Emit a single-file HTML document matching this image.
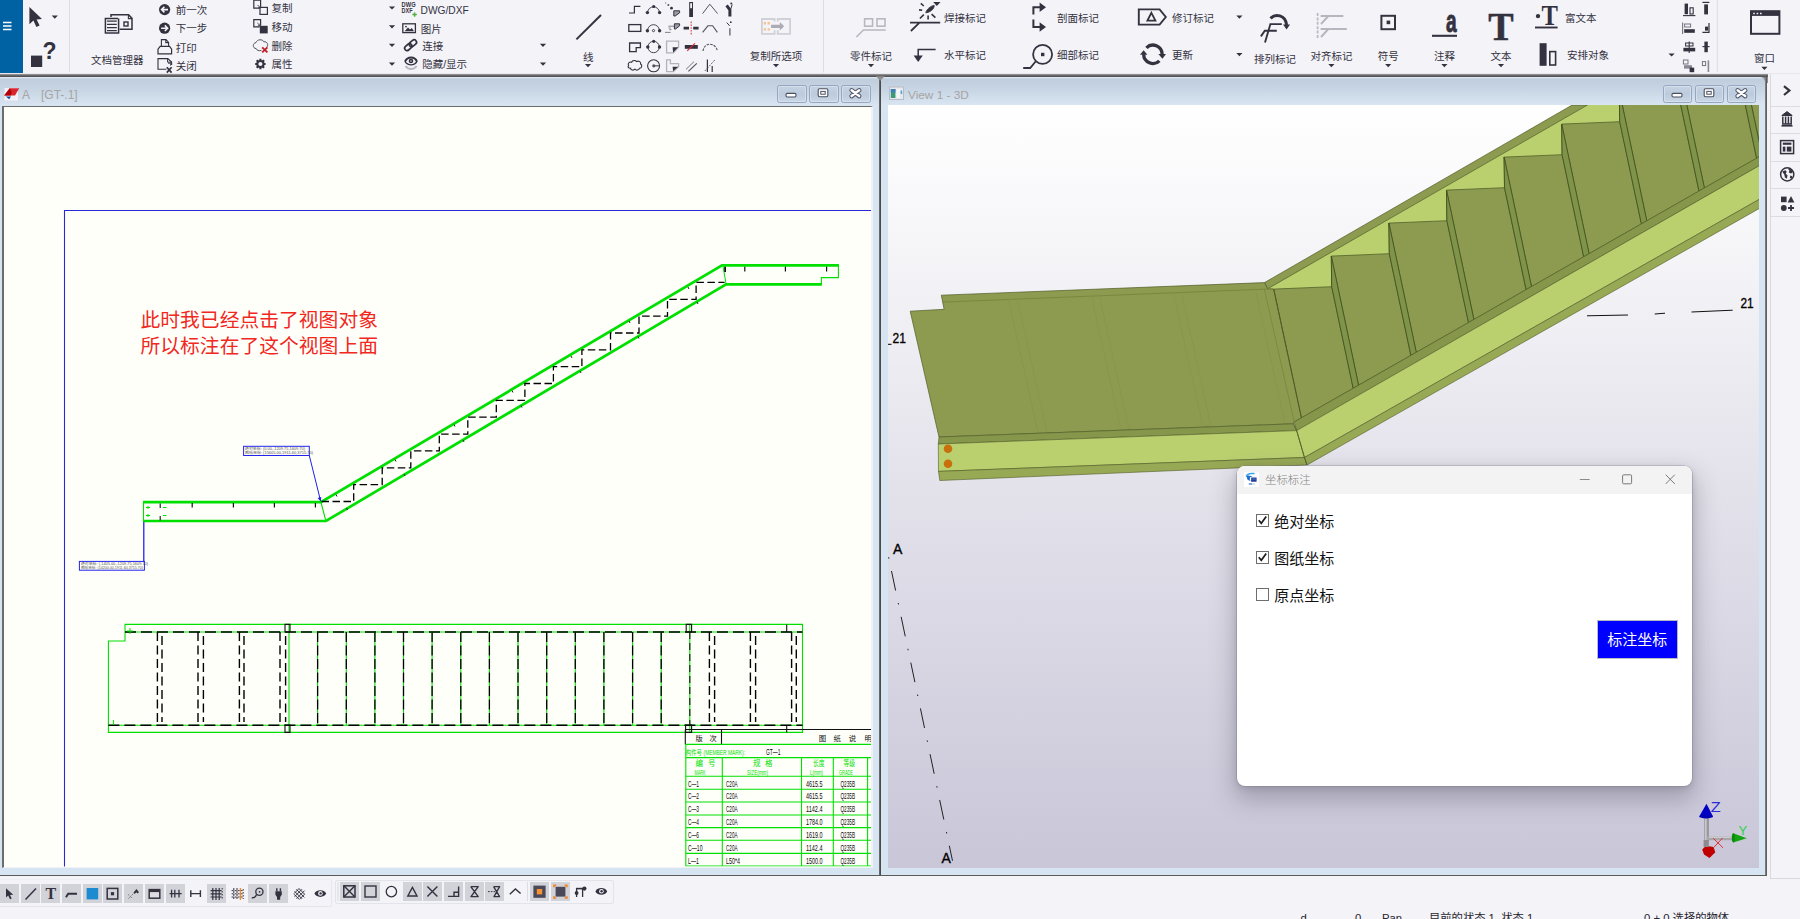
<!DOCTYPE html><html lang="zh-CN"><head><meta charset="utf-8"><title>Tekla Structures - GT-.1</title><style>

*{box-sizing:border-box}
html,body{margin:0;padding:0}
body{width:1800px;height:919px;overflow:hidden;position:relative;background:#f3f3f8;
 font-family:"Liberation Sans","Noto Sans CJK SC",sans-serif;color:#34323f}
.abs{position:absolute}
.t{position:absolute;white-space:nowrap;font-size:10.5px;line-height:12px;color:#34323f}
.tc{position:absolute;white-space:nowrap;font-size:10.5px;line-height:12px;color:#34323f;transform:translateX(-50%)}
svg{position:absolute;overflow:visible}
.dd{position:absolute;width:0;height:0;border-left:3.5px solid transparent;border-right:3.5px solid transparent;border-top:3.5px solid #34323f}
.wb{position:absolute;width:29.4px;height:17.2px;border:1px solid #97a6c1;border-radius:2.5px;background:linear-gradient(#c6d3e3,#bccbdd 50%,#c9d7e6);box-shadow:inset 0 0 0 1px rgba(225,234,244,.55)}
.tb{position:absolute;width:19px;height:19px;background:#d2d2d9}

</style></head><body>
<div class="abs" style="left:0;top:0;width:22.5px;height:74px;background:#0062a3"></div>
<svg style="left:0;top:0" width="23" height="74"><path d="M3 22.5h8.5M3 26h8.5M3 29.5h8.5" stroke="#fff" stroke-width="1.3"/></svg>
<div class="abs" style="left:0;top:72.6px;width:1800px;height:1.2px;background:linear-gradient(#ececf1,#e2e2e8)"></div><div class="abs" style="left:0;top:73.6px;width:1767.8px;height:3.4px;background:linear-gradient(#a4a4a6,#6a6a6c 45%,#4a4a4c)"></div>
<div class="abs" style="left:0;top:77px;width:1767.4px;height:798px;background:#d7e4f1"></div>
<div class="abs" style="left:0;top:77px;width:879px;height:29px;background:linear-gradient(#e6eef7 0,#bfcddd 2px,#c6d4e3 40%,#d9e5f1)"></div>
<div class="abs" style="left:1758px;top:77px;width:9.6px;height:6px;background:#8c8c8e"></div><div class="abs" style="left:881px;top:77px;width:884.4px;height:28px;border-top-right-radius:5px;background:linear-gradient(#e6eef7 0,#bfcddd 2px,#c6d4e3 40%,#d9e5f1)"></div>
<div class="abs" style="left:879px;top:77px;width:2.4px;height:798px;background:linear-gradient(90deg,#777,#3c3c3c)"></div>
<svg style="left:872px;top:76px" width="16" height="8"><path d="M3.8 0.2h9l-4.5 4.6z" fill="#8f8f8f"/></svg>
<div class="abs" style="left:2px;top:106px;width:871px;height:762.4px;background:#fffffa;border-left:2px solid #6c6c6c;border-top:1.5px solid #6c6c6c;border-right:2px solid #f1f1f8;border-bottom:1.8px solid #f1f1f8"></div>
<div class="abs" style="left:1765px;top:77px;width:2.4px;height:799px;background:linear-gradient(90deg,#8a8a8a,#505050)"></div>
<div class="abs" style="left:0;top:874.6px;width:1767.4px;height:1.6px;background:#5a5a5a"></div>
<div class="abs" style="left:1768px;top:77px;width:32px;height:801px;background:#f3f3f8"></div>
<div class="abs" style="left:1770px;top:73.6px;width:1px;height:804.4px;background:#d9d9df"></div>
<div class="abs" style="left:1770px;top:877.5px;width:30px;height:1px;background:#d9d9df"></div>
<div class="abs" style="left:1771px;top:105.5px;width:29px;height:1px;background:#dcdce2"></div>
<div class="abs" style="left:1771px;top:133px;width:29px;height:1px;background:#dcdce2"></div>
<div class="abs" style="left:1771px;top:160.5px;width:29px;height:1px;background:#dcdce2"></div>
<div class="abs" style="left:1771px;top:188px;width:29px;height:1px;background:#dcdce2"></div>
<div class="abs" style="left:1771px;top:215.5px;width:29px;height:1px;background:#dcdce2"></div>
<svg style="left:0;top:0" width="1800" height="919" viewBox="0 0 1800 919">
<defs><clipPath id="cL"><rect x="4" y="107.5" width="867" height="759.1"/></clipPath></defs>
<g clip-path="url(#cL)" fill="none">
<path d="M64.5 867V210.5H872" stroke="#2828d8" stroke-width="1.1"/>
<path d="M143.5 502.2H320.9L722 265.4H838.9" stroke="#00e000" stroke-width="2.8" stroke-linejoin="miter"/>
<path d="M143.5 521H326L726.1 284.3H821.8" stroke="#00e000" stroke-width="2.7" stroke-linejoin="miter"/>
<path d="M143.5 501V522M320.9 502L325.6 520M838.4 264.5V277.6H821.4V285" stroke="#00e000" stroke-width="1.1"/>
<path d="M722.9 266L726.1 284" stroke="#00e000" stroke-width="1"/>
<path d="M321.5 501.5H353.7V484.6H382.2V467.8H410.8V450.9H439.3V434.1H467.8V417.2H496.3V400.4H524.9V383.5H553.4V366.7H581.9V349.8H610.5V333.0H639.0V316.1H667.5V299.3H696.1V282.4H724.6" stroke="#000" stroke-width="1.3" stroke-dasharray="7.5 3.5"/>
<path d="M192.2 503V507.5M233.4 503V507.5M274.4 503V507.5M315.4 503V507.5M744.8 266.8V271.6M785.4 266.8V271.6M826.6 266.8V271.6M724.8 266.8V272M725.4 266.8V272" stroke="#111" stroke-width="1.2"/>
<path d="M160.2 503.4V508M160.2 516V520.4" stroke="#111" stroke-width="1.1"/>
<path d="M146 507.5h4M146 515.5h4M163 507.5h3.5M163 515.5h3.5M148 506v3M148 514v3" stroke="#00e000" stroke-width="1"/>
<path d="M336 494.5l1 2M395 459.5l1 2M454 424.5l1 2M512 390.5l1 2M571 356l1 2M629 321l1 2M688 287l1 2M346.5 508l1 2M404 474l1 2M463 440l1 2M521 405.5l1 2M580 371l1 2M638 336.5l1 2M697 302l1 2" stroke="#222" stroke-width="1"/>
<rect x="243.6" y="446.3" width="65.7" height="9.2" stroke="#2323ee" stroke-width="1"/>
<path d="M309.3 455.5L320.5 500.5" stroke="#2020f0" stroke-width="1"/><path d="M320.8 501.5l-3.2-3.6 3.6-1z" fill="#1a1af0"/>
<rect x="79.4" y="561.4" width="65" height="8.8" stroke="#2323ee" stroke-width="1"/>
<path d="M143.8 522V561.5" stroke="#1a1af0" stroke-width="1.25"/>
<path d="M125 624.4H802.5V732.4H108.4V641H125z" stroke="#00e000" stroke-width="1.1"/>
<path d="M125 632H802.5M108.4 725.2H802.5M289 624.4V732.4M689.8 624.4V732.4" stroke="#00e000" stroke-width="1.1"/>
<path d="M125 632H802.5M108.4 725.2H802.5" stroke="#000" stroke-width="1.5" stroke-dasharray="11 5"/>
<path d="M157.4 632V725M162 636V722M198 632V725M203.4 636V722M239.4 632V725M244 636V722M280 632V725M285.6 636V722M709.4 632V725M714.6 636V722M750.4 632V725M755.6 636V722M791.6 632V725M796.3 636V722" stroke="#000" stroke-width="1.4" stroke-dasharray="9 4.5"/>
<path d="M317.6 632V725M346.3 632V725M374.9 632V725M403.5 632V725M432.1 632V725M460.8 632V725M489.4 632V725M518.0 632V725M546.7 632V725M575.3 632V725M603.9 632V725M632.6 632V725M661.2 632V725" stroke="#00e000" stroke-width="1.1"/>
<path d="M317.6 632V725M346.3 632V725M374.9 632V725M403.5 632V725M432.1 632V725M460.8 632V725M489.4 632V725M518.0 632V725M546.7 632V725M575.3 632V725M603.9 632V725M632.6 632V725M661.2 632V725" stroke="#000" stroke-width="1.3" stroke-dasharray="10 3.5"/>
<path d="M689.8 632V725" stroke="#151515" stroke-width="1.1" stroke-dasharray="7 4"/>
<path d="M285 624.4h5v7.6h-5zM285 725h5v7.4h-5zM686.2 624.4h5.4v7.6h-5.4zM685.6 725h6v7.4h-6z" stroke="#111" stroke-width="1.1"/>
<path d="M786.7 624.4V632M786.7 725V732.4" stroke="#111" stroke-width="1.1"/>
<path d="M130 628v6M127 631h6M113.4 720v5" stroke="#00e000" stroke-width="1"/>
<path d="M685.3 729.5H872M685.3 729.5V744.4M721.5 729.5V744.4" stroke="#111" stroke-width="1.1"/>
<path d="M685.3 744.4H872M685.3 757.6H872M685.3 776.3H872M685.3 789.2H872M685.3 802H872M685.3 815H872M685.3 827.6H872M685.3 840.3H872M685.3 853.4H872M685.3 866H872M685.8 744.4V866M722.3 757.6V866M801.5 757.6V866M833.3 757.6V866M867.6 757.6V866" stroke="#00e000" stroke-width="1.1"/>
</g>
<g clip-path="url(#cL)" font-family="Liberation Sans, Noto Sans CJK SC, sans-serif" font-size="8.6" fill="#0a0a0a">
<text x="695.5" y="740.6" font-size="7.2">版</text>
<text x="709.5" y="740.6" font-size="7.2">次</text>
<text x="818.8" y="740.8" font-size="7.4">图</text>
<text x="833.4" y="740.8" font-size="7.4">纸</text>
<text x="848.8" y="740.8" font-size="7.4">说</text>
<text x="864.4" y="740.8" font-size="7.4">明</text>
<text x="685.8" y="754.5" fill="#00e000" textLength="16" lengthAdjust="spacingAndGlyphs" font-size="7">构件号</text>
<text x="703.5" y="754.5" fill="#00e000" textLength="41.5" lengthAdjust="spacingAndGlyphs" font-size="7.6">(MEMBER MARK):</text>
<text x="766" y="754.5" textLength="14.5" lengthAdjust="spacingAndGlyphs">GT—1</text>
<text x="695.5" y="766" fill="#00e000" font-size="7.5">编</text>
<text x="708" y="766" fill="#00e000" font-size="7.5">号</text>
<text x="694.5" y="774.5" fill="#00e000" textLength="11" lengthAdjust="spacingAndGlyphs" font-size="7">MARK</text>
<text x="753" y="766" fill="#00e000" font-size="7.5">规</text>
<text x="765" y="766" fill="#00e000" font-size="7.5">格</text>
<text x="747" y="774.5" fill="#00e000" textLength="21" lengthAdjust="spacingAndGlyphs" font-size="7">SIZE(mm)</text>
<text x="813" y="766" fill="#00e000" textLength="11.5" lengthAdjust="spacingAndGlyphs" font-size="7.5">长度</text>
<text x="810" y="774.5" fill="#00e000" textLength="13" lengthAdjust="spacingAndGlyphs" font-size="7">L(mm)</text>
<text x="843.5" y="766" fill="#00e000" textLength="11.5" lengthAdjust="spacingAndGlyphs" font-size="7.5">等级</text>
<text x="839" y="774.5" fill="#00e000" textLength="14" lengthAdjust="spacingAndGlyphs" font-size="7">GRADE</text>
<text x="688" y="786.6" textLength="11" lengthAdjust="spacingAndGlyphs">C—1</text>
<text x="726" y="786.6" textLength="11.5" lengthAdjust="spacingAndGlyphs">C20A</text>
<text x="806" y="786.6" textLength="16.5" lengthAdjust="spacingAndGlyphs">4615.5</text>
<text x="840.5" y="786.6" textLength="14.5" lengthAdjust="spacingAndGlyphs">Q235B</text>
<text x="688" y="799.4300000000001" textLength="11" lengthAdjust="spacingAndGlyphs">C—2</text>
<text x="726" y="799.4300000000001" textLength="11.5" lengthAdjust="spacingAndGlyphs">C20A</text>
<text x="806" y="799.4300000000001" textLength="16.5" lengthAdjust="spacingAndGlyphs">4615.5</text>
<text x="840.5" y="799.4300000000001" textLength="14.5" lengthAdjust="spacingAndGlyphs">Q235B</text>
<text x="688" y="812.26" textLength="11" lengthAdjust="spacingAndGlyphs">C—3</text>
<text x="726" y="812.26" textLength="11.5" lengthAdjust="spacingAndGlyphs">C20A</text>
<text x="806" y="812.26" textLength="16.5" lengthAdjust="spacingAndGlyphs">1142.4</text>
<text x="840.5" y="812.26" textLength="14.5" lengthAdjust="spacingAndGlyphs">Q235B</text>
<text x="688" y="825.09" textLength="11" lengthAdjust="spacingAndGlyphs">C—4</text>
<text x="726" y="825.09" textLength="11.5" lengthAdjust="spacingAndGlyphs">C20A</text>
<text x="806" y="825.09" textLength="16.5" lengthAdjust="spacingAndGlyphs">1784.0</text>
<text x="840.5" y="825.09" textLength="14.5" lengthAdjust="spacingAndGlyphs">Q235B</text>
<text x="688" y="837.9200000000001" textLength="11" lengthAdjust="spacingAndGlyphs">C—6</text>
<text x="726" y="837.9200000000001" textLength="11.5" lengthAdjust="spacingAndGlyphs">C20A</text>
<text x="806" y="837.9200000000001" textLength="16.5" lengthAdjust="spacingAndGlyphs">1619.0</text>
<text x="840.5" y="837.9200000000001" textLength="14.5" lengthAdjust="spacingAndGlyphs">Q235B</text>
<text x="688" y="850.75" textLength="14.5" lengthAdjust="spacingAndGlyphs">C—10</text>
<text x="726" y="850.75" textLength="11.5" lengthAdjust="spacingAndGlyphs">C20A</text>
<text x="806" y="850.75" textLength="16.5" lengthAdjust="spacingAndGlyphs">1142.4</text>
<text x="840.5" y="850.75" textLength="14.5" lengthAdjust="spacingAndGlyphs">Q235B</text>
<text x="688" y="863.58" textLength="11" lengthAdjust="spacingAndGlyphs">L—1</text>
<text x="726" y="863.58" textLength="14" lengthAdjust="spacingAndGlyphs">L50*4</text>
<text x="806" y="863.58" textLength="16.5" lengthAdjust="spacingAndGlyphs">1500.0</text>
<text x="840.5" y="863.58" textLength="14.5" lengthAdjust="spacingAndGlyphs">Q235B</text>
</g>
<g clip-path="url(#cL)" font-family="Liberation Sans, Noto Sans CJK SC, sans-serif" font-size="3.6" fill="#555">
<text x="245" y="450.3" textLength="60" lengthAdjust="spacingAndGlyphs">绝对坐标: (0.00,-1209.75,1609.70)</text>
<text x="245" y="454.3" textLength="68" lengthAdjust="spacingAndGlyphs">图纸坐标: (15605.00,1911.60,3715.70)</text>
<text x="81" y="565.2" textLength="67" lengthAdjust="spacingAndGlyphs">绝对坐标: (-1405.00,-1209.75,1609.70)</text>
<text x="81" y="569" textLength="62" lengthAdjust="spacingAndGlyphs">图纸坐标: (14200.00,1911.60,3715.70)</text>
</g>
<g font-family="Liberation Sans, Noto Sans CJK SC, sans-serif" font-size="19.8" fill="#f0281e">
<text x="140.5" y="326.6" textLength="237.5" lengthAdjust="spacing">此时我已经点击了视图对象</text>
<text x="140.5" y="353" textLength="237.5" lengthAdjust="spacing">所以标注在了这个视图上面</text>
</g>
</svg>
<svg style="left:0;top:0" width="1800" height="919" viewBox="0 0 1800 919">
<defs><linearGradient id="bg3" x1="0" y1="0" x2="0" y2="1"><stop offset="0" stop-color="#ffffff"/><stop offset="0.12" stop-color="#f9f9fb"/><stop offset="0.45" stop-color="#e6e5ed"/><stop offset="1" stop-color="#c9c6d8"/></linearGradient><clipPath id="c3"><rect x="888" y="105" width="871" height="763"/></clipPath></defs>
<rect x="888" y="105" width="871" height="763" fill="url(#bg3)"/>
<g clip-path="url(#c3)" stroke-linejoin="round">
<polygon points="1267.4,288.5 1587.0,105.0 1800.0,105.0 1800.0,134.0 1294.2,422.0" fill="#bad06f"/>
<polygon points="1264.5,282.6 1572.2,105.0 1587.5,105.0 1267.6,288.8" fill="#8c9b4f" stroke="#4f5d27" stroke-width="0.7"/>
<polygon points="1273.7,289.1 1331.7,286.7 1353.2,388.3 1301.0,418.1" fill="#8c9b4f" stroke="#4f5d27" stroke-width="0.75"/>
<path d="M1331.7 286.7L1331.3 256.1" stroke="#4a5826" stroke-width="0.9"/>
<polygon points="1331.3,256.1 1389.3,253.7 1410.9,355.4 1358.6,385.2" fill="#8c9b4f" stroke="#4f5d27" stroke-width="0.75"/>
<polygon points="1331.3,256.1 1358.6,385.2 1353.2,388.3 1331.7,286.7" fill="#7f9448" stroke="#3f4c1d" stroke-width="0.8"/>
<path d="M1389.3 253.7L1388.9 223.1" stroke="#4a5826" stroke-width="0.9"/>
<polygon points="1388.9,223.1 1446.9,220.7 1468.5,322.6 1416.3,352.4" fill="#8c9b4f" stroke="#4f5d27" stroke-width="0.75"/>
<polygon points="1388.9,223.1 1416.3,352.4 1410.9,355.4 1389.3,253.7" fill="#7f9448" stroke="#3f4c1d" stroke-width="0.8"/>
<path d="M1446.9 220.7L1446.5 190.1" stroke="#4a5826" stroke-width="0.9"/>
<polygon points="1446.5,190.1 1504.5,187.7 1526.1,289.7 1473.9,319.5" fill="#8c9b4f" stroke="#4f5d27" stroke-width="0.75"/>
<polygon points="1446.5,190.1 1473.9,319.5 1468.5,322.6 1446.9,220.7" fill="#7f9448" stroke="#3f4c1d" stroke-width="0.8"/>
<path d="M1504.5 187.7L1504.1 157.1" stroke="#4a5826" stroke-width="0.9"/>
<polygon points="1504.1,157.1 1562.1,154.7 1583.7,256.8 1531.5,286.6" fill="#8c9b4f" stroke="#4f5d27" stroke-width="0.75"/>
<polygon points="1504.1,157.1 1531.5,286.6 1526.1,289.7 1504.5,187.7" fill="#7f9448" stroke="#3f4c1d" stroke-width="0.8"/>
<path d="M1562.1 154.7L1561.7 124.1" stroke="#4a5826" stroke-width="0.9"/>
<polygon points="1561.7,124.1 1619.7,121.7 1641.4,223.9 1589.1,253.7" fill="#8c9b4f" stroke="#4f5d27" stroke-width="0.75"/>
<polygon points="1561.7,124.1 1589.1,253.7 1583.7,256.8 1562.1,154.7" fill="#7f9448" stroke="#3f4c1d" stroke-width="0.8"/>
<path d="M1619.7 121.7L1619.3 91.1" stroke="#4a5826" stroke-width="0.9"/>
<polygon points="1619.3,91.1 1677.3,88.7 1699.0,191.1 1646.8,220.9" fill="#8c9b4f" stroke="#4f5d27" stroke-width="0.75"/>
<polygon points="1619.3,91.1 1646.8,220.9 1641.4,223.9 1619.7,121.7" fill="#7f9448" stroke="#3f4c1d" stroke-width="0.8"/>
<path d="M1677.3 88.7L1676.9 58.1" stroke="#4a5826" stroke-width="0.9"/>
<polygon points="1676.9,58.1 1734.9,55.7 1756.6,158.2 1704.4,188.0" fill="#8c9b4f" stroke="#4f5d27" stroke-width="0.75"/>
<polygon points="1676.9,58.1 1704.4,188.0 1699.0,191.1 1677.3,88.7" fill="#7f9448" stroke="#3f4c1d" stroke-width="0.8"/>
<path d="M1734.9 55.7L1734.5 25.1" stroke="#4a5826" stroke-width="0.9"/>
<polygon points="1734.5,25.1 1792.5,22.7 1814.3,125.3 1762.0,155.1" fill="#8c9b4f" stroke="#4f5d27" stroke-width="0.75"/>
<polygon points="1734.5,25.1 1762.0,155.1 1756.6,158.2 1734.9,55.7" fill="#7f9448" stroke="#3f4c1d" stroke-width="0.8"/>
<path d="M1792.5 22.7L1792.1 -7.9" stroke="#4a5826" stroke-width="0.9"/>
<polygon points="1792.1,-7.9 1850.1,-10.3 1871.9,92.4 1819.6,122.2" fill="#8c9b4f" stroke="#4f5d27" stroke-width="0.75"/>
<polygon points="1792.1,-7.9 1819.6,122.2 1814.3,125.3 1792.5,22.7" fill="#7f9448" stroke="#3f4c1d" stroke-width="0.8"/>
<path d="M1850.1 -10.3L1849.7 -40.9" stroke="#4a5826" stroke-width="0.9"/>
<polygon points="941.3,295.2 1264.5,282.6 1267.6,288.8 1273.7,289.1 1301.4,417.6 1294.2,422.0 1293.5,423.8 939.0,437.0 910.2,311.2 944.1,309.3" fill="#8c9b4f" stroke="#4f5d27" stroke-width="0.7"/>
<path d="M942.6 302.1L1273 288.8" stroke="#78883f" stroke-width="1" fill="none"/>
<path d="M1264.3 289L1294.2 422" stroke="#74843c" stroke-width="0.7" fill="none"/>
<path d="M1273.7 289.1L1301.4 417.6" stroke="#4a5824" stroke-width="0.8" fill="none"/>
<path d="M1008 297.4L1038 432.5" stroke="#86964b" stroke-width="0.8" fill="none"/>
<path d="M1017 297.0L1047 432.2" stroke="#86964b" stroke-width="0.8" fill="none"/>
<path d="M1091 294.0L1121 429.4" stroke="#86964b" stroke-width="0.8" fill="none"/>
<path d="M1099 293.7L1129 429.1" stroke="#86964b" stroke-width="0.8" fill="none"/>
<path d="M1173 290.8L1203 426.4" stroke="#86964b" stroke-width="0.8" fill="none"/>
<path d="M1181 290.4L1211 426.1" stroke="#86964b" stroke-width="0.8" fill="none"/>
<path d="M1255 287.5L1285 423.3" stroke="#86964b" stroke-width="0.8" fill="none"/>
<polygon points="939.0,437.0 1293.5,423.8 1296.7,430.6 938.3,444.0" fill="#86964a" stroke="#4f5d27" stroke-width="0.6"/>
<polygon points="938.3,444.0 1296.7,430.6 1304.5,457.5 938.5,471.4" fill="#bad06f" stroke="#4f5d27" stroke-width="0.6"/>
<polygon points="938.5,471.4 1304.5,457.5 1307.0,465.0 939.8,480.5" fill="#98a955" stroke="#4f5d27" stroke-width="0.6"/>
<polygon points="1294.2,422.0 1800.0,133.4 1800.0,142.4 1296.7,430.6" fill="#86964a" stroke="#4f5d27" stroke-width="0.6"/>
<polygon points="1296.7,430.6 1800.0,142.4 1800.0,176.2 1304.5,457.5" fill="#bad06f" stroke="#4f5d27" stroke-width="0.6"/>
<polygon points="1304.5,457.5 1800.0,176.2 1800.0,185.4 1307.0,465.0" fill="#98a955" stroke="#4f5d27" stroke-width="0.6"/>
<path d="M1293.5 423.8L1296.7 430.6L1304.5 457.5L1307 465" stroke="#4f5d27" stroke-width="0.7" fill="none"/>
<circle cx="948" cy="448.8" r="4.3" fill="#c8700d"/><circle cx="948" cy="463.8" r="4.3" fill="#c8700d"/>
</g>
<g font-family="Liberation Sans, sans-serif" fill="#000" clip-path="url(#c3)">
<text x="892.6" y="343" font-size="15" stroke="#000" stroke-width="0.35" textLength="13.4" lengthAdjust="spacingAndGlyphs">21</text><path d="M888 344.3h3.5" stroke="#000" stroke-width="1"/>
<text x="1740.4" y="308.4" font-size="15" stroke="#000" stroke-width="0.35" textLength="13.2" lengthAdjust="spacingAndGlyphs">21</text>
<path d="M1587 315.8L1628 315M1654.7 314L1665 313.2M1691.5 312L1732.7 310.2" stroke="#111" stroke-width="1" fill="none"/>
<text x="893" y="553.5" font-size="14" stroke="#000" stroke-width="0.35">A</text>
<text x="941.5" y="862.5" font-size="14" stroke="#000" stroke-width="0.35">A</text>
<path d="M888.6 557.2L952.5 860.8" stroke="#222" stroke-width="1" stroke-dasharray="1.5 12.6 20 12.7" fill="none"/>
</g>
<g>
<rect x="1704.2" y="816" width="4.8" height="26" fill="#9c9aa0"/><rect x="1705" y="816" width="1.6" height="26" fill="#c9c8cc"/>
<rect x="1707" y="836" width="27" height="4.2" fill="#a8a6ab"/><rect x="1709" y="836.4" width="25" height="1.4" fill="#d4d3d7"/>
<polygon points="1706.5,803.8 1699.2,816.5 1713,816.5" fill="#0000c8"/><ellipse cx="1706.1" cy="816.6" rx="6.9" ry="1.8" fill="#0000b4"/>
<polygon points="1746.8,838.3 1733.2,833.2 1733.2,842.4" fill="#12a512"/><ellipse cx="1733.4" cy="837.8" rx="1.6" ry="4.6" fill="#0c8c0c"/>
<path d="M1702.2 849.5L1706 845.8L1713.5 847L1715.3 852.2L1709.5 858L1704 854.5z" fill="#c00000"/>
<rect x="1703.6" y="840" width="5.2" height="7" fill="#8d8b90"/>
<path d="M1713.2 838.2L1723 847.8M1722.5 838L1713.8 847.5" stroke="#e02020" stroke-width="0.9"/>
<text x="1710.8" y="812" font-family="Liberation Sans, sans-serif" font-size="15.5" fill="#2a2ad8" textLength="10" lengthAdjust="spacingAndGlyphs">Z</text>
<text x="1738.5" y="834.5" font-family="Liberation Sans, sans-serif" font-size="13" fill="#2fd24a">Y</text>
</g>
</svg>
<svg style="left:3px;top:86px" width="18" height="16"><rect x="1.5" y="2" width="13.5" height="12.5" fill="#f3f1f7"/><path d="M6.8 2.2H16.2L12 9.6H1.2z" fill="#d8262e"/><path d="M6.8 2.2L1.2 9.6H7.8L8.6 6z" fill="#b00005"/><path d="M2.8 10.4H8L6.2 13.2z" fill="#0a4fa0"/></svg>
<div class="t" style="left:22px;top:88px;font-size:12px;line-height:14px;color:#a6a4a4">A</div>
<div class="t" style="left:41px;top:88px;font-size:12px;line-height:14px;color:#a6a4a4">[GT-.1]</div>
<div class="wb" style="left:777.2px;top:85.4px"></div>
<svg style="left:777.2px;top:85.4px" width="29" height="17"><rect x="9" y="8.4" width="10" height="3.6" rx="1.2" fill="#fff" stroke="#4a4f5e" stroke-width="1.1"/></svg>
<div class="wb" style="left:809.2px;top:85.4px"></div>
<svg style="left:809.2px;top:85.4px" width="29" height="17"><rect x="9.2" y="3.8" width="9.6" height="8" rx="1.2" fill="#fff" stroke="#4a4f5e" stroke-width="1.1"/><rect x="11.8" y="6.4" width="4.4" height="2.8" fill="#fff" stroke="#4a4f5e" stroke-width="1"/></svg>
<div class="wb" style="left:841.2px;top:85.4px"></div>
<svg style="left:841.2px;top:85.4px" width="29" height="17"><path d="M10.6 5.3L18.2 11.1M18.2 5.3L10.6 11.1" stroke="#4f5567" stroke-width="4.5" stroke-linecap="round"/><path d="M10.6 5.3L18.2 11.1M18.2 5.3L10.6 11.1" stroke="#fff" stroke-width="2.5" stroke-linecap="round"/></svg>
<svg style="left:889px;top:86px" width="16" height="15"><rect x="0.5" y="1" width="14" height="12.5" fill="#e6e9ee" stroke="#b9bcc6" stroke-width="1"/><rect x="1.8" y="3" width="4.6" height="9" fill="#3c9a74"/><rect x="1.8" y="3" width="4.6" height="3.5" fill="#3f7fb8"/><rect x="7.6" y="3" width="3.2" height="9" fill="#f4f6f8"/><rect x="11.6" y="4.5" width="1.6" height="3.5" fill="#5aa0d0"/></svg>
<div class="t" style="left:908px;top:88px;font-size:11.8px;line-height:14px;color:#a6a4a4">View 1 - 3D</div>
<div class="wb" style="left:1663px;top:85.4px"></div>
<svg style="left:1663px;top:85.4px" width="29" height="17"><rect x="9" y="8.4" width="10" height="3.6" rx="1.2" fill="#fff" stroke="#4a4f5e" stroke-width="1.1"/></svg>
<div class="wb" style="left:1695px;top:85.4px"></div>
<svg style="left:1695px;top:85.4px" width="29" height="17"><rect x="9.2" y="3.8" width="9.6" height="8" rx="1.2" fill="#fff" stroke="#4a4f5e" stroke-width="1.1"/><rect x="11.8" y="6.4" width="4.4" height="2.8" fill="#fff" stroke="#4a4f5e" stroke-width="1"/></svg>
<div class="wb" style="left:1727px;top:85.4px"></div>
<svg style="left:1727px;top:85.4px" width="29" height="17"><path d="M10.6 5.3L18.2 11.1M18.2 5.3L10.6 11.1" stroke="#4f5567" stroke-width="4.5" stroke-linecap="round"/><path d="M10.6 5.3L18.2 11.1M18.2 5.3L10.6 11.1" stroke="#fff" stroke-width="2.5" stroke-linecap="round"/></svg>
<div class="abs" style="left:1237px;top:466px;width:455px;height:320px;border-radius:8px;background:#fff;box-shadow:0 0 0 0.6px rgba(120,120,130,.55),0 11px 24px 3px rgba(66,64,80,.32),0 2px 6px rgba(66,64,80,.2);overflow:hidden"><div style="height:28.4px;background:#f3f3f3"></div></div>
<svg style="left:1244.2px;top:472px" width="15" height="15"><rect width="15" height="15" fill="#fff"/><path d="M2.2 4.6C3 2.4 5.6 1.4 8.4 1.6L10.6 1.4" fill="none" stroke="#37a6e6" stroke-width="1.5"/><path d="M2.4 4L3.4 7.6L5.8 9L6 5.2L8.8 4.4L4.6 3.4z" fill="#1f6fd0"/><path d="M7.2 5.6H12.6V9.8H7.4L6.4 8.6H7.2z" fill="#22409a"/><path d="M8.4 7h3.4" stroke="#6c8fd8" stroke-width="0.7"/><path d="M4.8 12h3.4" stroke="#2a62c8" stroke-width="1.1"/><path d="M8.6 12h2.2" stroke="#a9c3ee" stroke-width="1"/></svg>
<div class="t" style="left:1265px;top:472.5px;font-size:11.4px;line-height:14px;color:#858585;font-weight:300">坐标标注</div>
<svg style="left:1575px;top:470px" width="110" height="20"><path d="M4.8 9.5h9.8" stroke="#8a8a8a" stroke-width="1"/><rect x="47.6" y="4.8" width="9" height="9" rx="1" fill="none" stroke="#7a7a7a" stroke-width="1"/><path d="M90.7 4.7L99.8 13.9M99.8 4.7L90.7 13.9" stroke="#7a7a7a" stroke-width="1"/></svg>
<div class="abs" style="left:1256.2px;top:514.2px;width:13px;height:12.6px;border:1px solid #6e6e6e;background:#fff"></div>
<svg style="left:1256.2px;top:514.2px" width="13" height="13"><path d="M2.8 6.2L5.3 9.3L10.2 2.6" fill="none" stroke="#1c1c1c" stroke-width="1.7"/></svg>
<div class="t" style="left:1274.2px;top:511.80000000000007px;font-size:15px;line-height:19px;color:#111">绝对坐标</div>
<div class="abs" style="left:1256.2px;top:551.4px;width:13px;height:12.6px;border:1px solid #6e6e6e;background:#fff"></div>
<svg style="left:1256.2px;top:551.4px" width="13" height="13"><path d="M2.8 6.2L5.3 9.3L10.2 2.6" fill="none" stroke="#1c1c1c" stroke-width="1.7"/></svg>
<div class="t" style="left:1274.2px;top:549.0px;font-size:15px;line-height:19px;color:#111">图纸坐标</div>
<div class="abs" style="left:1256.2px;top:588.4px;width:13px;height:12.6px;border:1px solid #6e6e6e;background:#fff"></div>
<div class="t" style="left:1274.2px;top:586.0px;font-size:15px;line-height:19px;color:#111">原点坐标</div>
<div class="abs" style="left:1597px;top:619.5px;width:80.6px;height:39.2px;background:#0000ff;border:1px solid #b9b9c6;color:#fff;font-size:15px;line-height:37px;text-align:center">标注坐标</div>
<svg style="left:1771px;top:78px" width="29" height="140" fill="none" stroke="#34323f"><path d="M13 8.2L18.4 12.6L13 17" stroke-width="2.2"/><path d="M10.5 47.8h11" stroke-width="1.6"/><path d="M10.8 37.5L16 33.6L21.2 37.5z" fill="#34323f" stroke-width="1"/><path d="M11.8 38.5v7.6h8.4v-7.6M14.6 38.5v7.6M17.4 38.5v7.6" stroke-width="1.5"/><rect x="9.6" y="62.6" width="13" height="13" stroke-width="1.5"/><rect x="11.8" y="64.6" width="8.6" height="2.2" fill="#34323f" stroke="none"/><rect x="11.8" y="68.6" width="2.6" height="5" fill="#34323f" stroke="none"/><rect x="15.8" y="68.6" width="4.6" height="5" fill="#34323f" stroke="none"/><circle cx="16.2" cy="96.4" r="6.6" stroke-width="1.5"/><path d="M11.2 93.5l3.2-1.3 1.3 1.6-1 2 1.8 1.5-.6 3.4-2-1.2-.5-2.8zM16.6 90.6l3.8.6 1.4 3-1.8 1.4-2.2-1.2.6-1.8zM19.4 97.6l2 .6-.8 2.6-1.8-.8z" fill="#34323f" stroke="none"/><rect x="10" y="118.6" width="5.6" height="5.6" fill="#34323f" stroke="none"/><path d="M20 118l3.4 6.4h-6.8z" fill="#34323f" stroke="none"/><circle cx="12.8" cy="130" r="2.9" fill="#34323f" stroke="none"/><path d="M17 130h6M20 127v6" stroke-width="1.8"/></svg>
<svg style="left:0;top:0" width="1800" height="74" viewBox="0 0 1800 74" fill="none" stroke="#34323f" stroke-width="1.3">
<path d="M69.5 0V72M823.5 0V72.5M1717.3 0V72" stroke="#dcdce2" stroke-width="1"/>
<path d="M29.4 7V24.2L33.4 20.6L36.4 27L39.6 25.4L36.6 19.4L42 19z" fill="#34323f" stroke="none"/><path d="M51.7 15.6h6.2l-3.1 3.2z" fill="#34323f" stroke="none"/>
<rect x="31" y="55.6" width="11.2" height="11.4" fill="#34323f" stroke="none"/>
<text x="49.6" y="59" text-anchor="middle" font-family="Liberation Sans,sans-serif" font-weight="bold" font-size="23" fill="#34323f" stroke="none">?</text>
<path d="M118 18.4H105.4V33H118.6V18.4" stroke-width="1.5"/><path d="M107 21.2h9.8M107 24.4h9.8M107 27.6h9.8M107 30.6h9.8" stroke-width="1.3"/>
<path d="M111 17V14.8H128.6L132 18.4V29.2H119.6" stroke-width="1.5"/><path d="M128.4 15v3.6h3.6" stroke-width="1.1"/><rect x="124" y="22" width="4" height="4" stroke-width="1.4"/>
<circle cx="164.6" cy="9.6" r="5.6" fill="#34323f" stroke="none"/><path d="M168 9.6h-6M164.4 6.8L161.6 9.6L164.4 12.4" stroke="#f3f3f8" stroke-width="1.6"/>
<circle cx="164.6" cy="28.2" r="5.6" fill="#34323f" stroke="none"/><path d="M161.2 28.2h6M164.8 25.4L167.6 28.2L164.8 31" stroke="#f3f3f8" stroke-width="1.6"/>
<path d="M161.4 46.4V39.6H166L168.6 42.4V46.4M165.8 39.8V42.6H168.4" stroke-width="1.1"/><path d="M158 53.8V49.2L160.2 46.4H169.6L171.6 49.2V53.8z" stroke-width="1.2"/>
<path d="M166.4 69.2H158V58.6H167.8L171.6 62V65" stroke-width="1.1"/><path d="M167.6 58.8V62.2H171.4" stroke-width="1"/><path d="M166.8 67.2L171.6 72.6M171.6 67.2L166.8 72.6" stroke-width="1.7"/><path d="M168 63.2h2.6v2.4" stroke-width="0.9"/>
<path d="M259.6 8.2H253.8V0.2H260.6V6.6" stroke-width="1.2"/><rect x="260" y="7.4" width="7.4" height="7" stroke-width="1.2"/><path d="M257.6 5l2.6 2.6M260.6 5.4v2.4h-2.4" stroke-width="0.9"/>
<path d="M259.6 26.8H253.8V19.6H260.6V25.4" stroke-width="1.2"/><rect x="259.8" y="25.8" width="7.9" height="7.6" fill="#34323f" stroke="none"/><path d="M257.4 23l2.6 2.6M260.2 23.4v2.4h-2.4" stroke-width="0.9"/>
<path d="M261.4 50.4C259 51.2 256.6 50.4 256.2 48.6C252.4 48.4 252.4 43 256 42.6C257 39.2 262.6 38.8 263.8 41.8C267.2 41.2 268.8 45 266.8 47" stroke-width="1" stroke="#55535f"/><path d="M262.2 47.4L267.4 52.4M267.4 47.4L262.2 52.4" stroke="#c21f2b" stroke-width="1.9"/>
<circle cx="260.4" cy="64" r="3.1" stroke-width="2"/><path d="M263.8 64.0L265.6 64.0M262.8 66.4L264.1 67.7M260.4 67.4L260.4 69.2M258.0 66.4L256.7 67.7M257.0 64.0L255.2 64.0M258.0 61.6L256.7 60.3M260.4 60.6L260.4 58.8M262.8 61.6L264.1 60.3" stroke-width="2.1"/>
<path d="M388.9 6.4h6.2l-3.1 3.2z" fill="#34323f" stroke="none"/><path d="M388.9 25.2h6.2l-3.1 3.2z" fill="#34323f" stroke="none"/><path d="M388.9 43.8h6.2l-3.1 3.2z" fill="#34323f" stroke="none"/><path d="M388.9 62.6h6.2l-3.1 3.2z" fill="#34323f" stroke="none"/><path d="M539.9 43.8h6.2l-3.1 3.2z" fill="#34323f" stroke="none"/><path d="M539.9 62.6h6.2l-3.1 3.2z" fill="#34323f" stroke="none"/>
<text x="401.6" y="7.4" font-family="Liberation Sans,sans-serif" font-weight="bold" font-size="7.4" fill="#34323f" stroke="none" textLength="14" lengthAdjust="spacingAndGlyphs">DWG</text>
<text x="401.6" y="13.2" font-family="Liberation Sans,sans-serif" font-weight="bold" font-size="7.4" fill="#34323f" stroke="none" textLength="11" lengthAdjust="spacingAndGlyphs">DXF</text>
<path d="M412.4 14.6h4.4M414.6 12.4v4.4" stroke="#4fae3c" stroke-width="1.5"/>
<rect x="402.8" y="23.8" width="12.6" height="8.8" stroke-width="1.3"/><path d="M404.6 31.2L408 27.6L410 29.4L411.8 28L414 31.2z" fill="#34323f" stroke="none"/><circle cx="406" cy="26.6" r="0.9" fill="#34323f" stroke="none"/>
<g transform="rotate(-40 410.6 45.2)" stroke-width="1.7"><rect x="403.6" y="42.8" width="8" height="4.8" rx="2.4"/><rect x="409.6" y="42.8" width="8" height="4.8" rx="2.4"/></g>
<path d="M405 61.6C407.6 56.2 414.6 56.2 417 61.6" stroke-width="2"/><path d="M405 61.4C407.6 66 414.6 66 417 61.4" stroke-width="1.2"/><circle cx="411" cy="61" r="2.3" fill="#34323f" stroke="none"/><circle cx="411" cy="61" r="0.7" fill="#f3f3f8" stroke="none"/><path d="M405.6 66C408 70 414 70 416.6 66" stroke="#b9b8c2" stroke-width="2"/>
<path d="M576.4 39.4L601 15" stroke-width="2"/><path d="M584.9 64.0h6.2l-3.1 3.2z" fill="#34323f" stroke="none"/>
<path d="M629 13h5.4V6.4h6" stroke-width="1.2"/>
<path d="M647.4 12.4C648.6 5 658.4 5 659.6 12.4" stroke-width="0.9"/><circle cx="647.4" cy="12.6" r="1.7" fill="#34323f" stroke="none"/><circle cx="653.7" cy="6.5" r="1.6" fill="#34323f" stroke="none"/><circle cx="659.6" cy="12.6" r="1.7" fill="#34323f" stroke="none"/>
<circle cx="665.6" cy="2.9" r="0.6" fill="#77757f" stroke="none"/><circle cx="668.3" cy="5.1" r="1" fill="#55535f" stroke="none"/><circle cx="671.5" cy="8.2" r="1.4" fill="#34323f" stroke="none"/><path d="M673.8 10.8H679.6V12.8L675.2 16H673.8z" fill="#9b9aa5" stroke="#34323f" stroke-width="1"/>
<rect x="689.2" y="2" width="3.8" height="15" fill="#34323f" stroke="none"/><rect x="690.2" y="3.2" width="1.8" height="5" fill="#f3f3f8" stroke="none"/>
<path d="M702.6 13.6L709.8 4.2L717.6 13.6" stroke="#55535f" stroke-width="1"/>
<path d="M729.9 16.6V10L726.6 5.4" stroke-width="3"/><path d="M730.6 9.4L732.2 4.6" stroke-width="1"/><circle cx="731.3" cy="3.6" r="1" fill="#34323f" stroke="none"/>
<rect x="628.8" y="24.6" width="12" height="6.8" stroke-width="1.3"/>
<path d="M647.4 30.4C648.6 22.8 658.4 22.8 659.6 30.4" stroke-width="0.9"/><circle cx="647.4" cy="30.7" r="1.7" fill="#34323f" stroke="none"/><circle cx="653.5" cy="30.6" r="1.1" stroke-width="0.9"/><circle cx="659.6" cy="30.7" r="1.7" fill="#34323f" stroke="none"/>
<path d="M665 32.4h5.6M669.4 29.6h2M668.6 28h2M668.4 26.2h5.6" stroke-width="0.8" stroke="#666"/><path d="M674.4 23.8H679.6V25.8L675.6 29H674.4z" fill="#9b9aa5" stroke="#34323f" stroke-width="1"/>
<path d="M683.6 28.2h5.4M693.2 28.2h5.4" stroke-width="2.8"/><path d="M691.2 21.6V34.8" stroke="#e04848" stroke-width="1.2" stroke-dasharray="1.6 1.2"/>
<path d="M702.6 32.4L707.9 25.8H712.6L717.4 32.4" stroke="#55535f" stroke-width="1.1"/>
<path d="M729.9 35.4V28.2" stroke-width="1.2" stroke="#55535f"/><path d="M726.8 22.6l2.8 3.2" stroke-width="1"/><circle cx="730.8" cy="22.2" r="0.9" fill="#34323f" stroke="none"/>
<path d="M629.6 43H640.4V47.6H636.2V51.6H629.6z" stroke-width="1.3"/>
<circle cx="653.6" cy="47" r="5.7" stroke-width="0.9"/><circle cx="653.7" cy="41.3" r="1.6" fill="#34323f" stroke="none"/><circle cx="647.8" cy="47" r="1.7" fill="#34323f" stroke="none"/><circle cx="659.5" cy="47" r="1.7" fill="#34323f" stroke="none"/>
<path d="M666.6 41.2H678.6V47.2L673.4 52.8H666.6z" stroke="#b4b3bc" stroke-width="1.3"/><path d="M672.6 47.3H678.2L673.1 52.4z" fill="#34323f" stroke="none"/>
<rect x="684.8" y="45" width="13" height="3.8" fill="#34323f" stroke="none"/><path d="M687.2 50.8L695 43.4" stroke="#d42a36" stroke-width="1.1"/>
<path d="M703 51C704.2 42 715.6 42 717.4 51" stroke-width="1.1" stroke="#55535f" stroke-dasharray="2.6 1"/>
<path d="M628.6 65.6C627.2 63 630 61.4 631.6 62.2C632.4 60 635.6 60 636.6 61.6C638.6 60.4 641.2 62 640.6 64C642.6 65.2 641.8 68.2 639.6 68.2C639 70.4 636 70.6 635 69.2C633.4 70.8 630.6 70 630.6 68.2C628.4 68.4 627.4 66.6 628.6 65.6z" stroke-width="1.1"/>
<circle cx="653.6" cy="65.8" r="6" stroke-width="1.1"/><circle cx="653.8" cy="65.8" r="1.6" fill="#55535f" stroke="none"/><path d="M654 65.8h5.6" stroke-width="1.2" stroke="#55535f"/>
<path d="M666.6 59.8H670.4V63.6H678.6V66.8L673.4 71.6H666.6z" stroke="#b4b3bc" stroke-width="1.3"/><path d="M672.6 66.8H678.2L673.1 71.3z" fill="#34323f" stroke="none"/>
<path d="M686 69.4L694 61.6" stroke="#77757f" stroke-width="1"/><path d="M688.4 71.4L696.8 63.4" stroke="#55535f" stroke-width="1.2"/>
<path d="M707.4 59.6V72M712.2 66v6" stroke-width="1.2"/><path d="M704.8 71L714.8 60" stroke="#55535f" stroke-width="0.9" stroke-dasharray="2 1.2"/>
<path d="M774.6 21.6V19H761.9V33.9H774.6V30.3M777.7 21.6V19H790.1V33.9H777.7V30.3" stroke="#d0d0d7" stroke-width="1.8"/>
<path d="M763.8 21.9h2.2v2.5h-2.2zM767.6 21.9h2.3v2.5h-2.3zM763.8 28.2h2.2v2.4h-2.2zM767.6 28.2h2.3v2.4h-2.3z" fill="#f6c28e" stroke="none"/><path d="M771.1 24.7H779.8V21.9L784.2 26.3L779.8 30.6V27.9H771.1z" fill="#adacb5" stroke="none"/>
<path d="M772.9 64.0h6.2l-3.1 3.2z" fill="#34323f" stroke="none"/>
</svg>
<div class="tc" style="left:117.3px;top:53.6px">文档管理器</div>
<div class="t" style="left:175.8px;top:3.6px">前一次</div>
<div class="t" style="left:175.8px;top:22.2px">下一步</div>
<div class="t" style="left:175.8px;top:41.6px">打印</div>
<div class="t" style="left:175.8px;top:60.2px">关闭</div>
<div class="t" style="left:271.6px;top:2px">复制</div>
<div class="t" style="left:271.6px;top:21px">移动</div>
<div class="t" style="left:271.6px;top:39.6px">删除</div>
<div class="t" style="left:271.6px;top:58.4px">属性</div>
<div class="t" style="left:420.6px;top:4.6px;font-size:10.2px">DWG/DXF</div>
<div class="t" style="left:420.8px;top:22.6px">图片</div>
<div class="t" style="left:422.2px;top:39.6px">连接</div>
<div class="t" style="left:422.2px;top:58.4px">隐藏/显示</div>
<div class="tc" style="left:588.2px;top:50.6px">线</div>
<div class="tc" style="left:776px;top:50.2px">复制所选项</div>
<svg style="left:0;top:0" width="1800" height="74" viewBox="0 0 1800 74" fill="none" stroke="#34323f" stroke-width="1.3">
<path d="M856.4 37L863.4 30H885.8" stroke="#b9b8c1" stroke-width="1.7"/><rect x="864.6" y="18.8" width="8" height="7.4" stroke="#b9b8c1" stroke-width="1.6"/><rect x="877" y="18.8" width="8" height="7.4" stroke="#b9b8c1" stroke-width="1.6"/>
<path d="M867.9 64.0h6.2l-3.1 3.2z" fill="#34323f" stroke="none"/>
<path d="M910 22.6H940.2M910.9 31L919.5 22.6" stroke-width="1.8"/><path d="M925.8 12.8C926.2 9.6 930.6 5.8 934.2 5.4C934.6 8.6 930 12.6 925.8 12.8z" fill="#34323f" stroke="#34323f" stroke-width="0.8"/>
<path d="M933.2 2.1h7.4l-3.8 3.8z" fill="#34323f" stroke="none"/><path d="M920.8 3.4L923.8 6M919 9.9L922.2 10.3M919.9 18.5L923.8 14.6M928.1 15.5V19.4M931.6 14.2L935.4 17.7" stroke-width="1.6"/>
<path d="M935.6 49.6H918.2V58" stroke-width="1.5"/><path d="M913.6 55.6h9.2l-4.6 6.4z" fill="#34323f" stroke="none"/>
<path d="M1033.4 14.6V7.2H1040" stroke-width="2"/><path d="M1039.6 2.4L1046 7.2L1039.6 12z" fill="#34323f" stroke="none"/><path d="M1033.4 19.6V27H1040" stroke-width="2"/><path d="M1039.6 22.2L1046 27L1039.6 31.8z" fill="#34323f" stroke="none"/>
<circle cx="1042.6" cy="54.4" r="9.5" stroke-width="1.8"/><rect x="1041" y="52.8" width="3.4" height="3.4" fill="#34323f" stroke="none"/><path d="M1035.8 61.2L1030.2 68H1023.2" stroke-width="1.8"/>
<path d="M1138.8 9.4H1159.6L1165.8 17L1159.6 24.6H1138.8z" stroke-width="1.9"/><path d="M1151.4 12.8L1155.4 20.6H1147.4z" stroke-width="1.8"/>
<path d="M1236.3 15.6h6.2l-3.1 3.2z" fill="#34323f" stroke="none"/><path d="M1236.3 53.0h6.2l-3.1 3.2z" fill="#34323f" stroke="none"/>
<path d="M1146.4 47.8A9.2 9.2 0 0 1 1162.1 54.3" stroke-width="3.3"/><path d="M1158.4 54H1166L1162.4 58.8z" fill="#34323f" stroke="none"/>
<path d="M1159.4 60.8A9.2 9.2 0 0 1 1143.7 54.3" stroke-width="3.3"/><path d="M1140 54.8H1147.4L1143.6 50.2z" fill="#34323f" stroke="none"/>
<path d="M1265 42.6L1270.4 24.1H1281.8M1260.9 36.4L1264.8 30.8H1276.8" stroke-width="1.9"/><path d="M1270.6 18.4C1275 13.4 1285.6 14.6 1286.6 25" stroke-width="3"/><path d="M1283 24.6H1290L1286.6 29.4z" fill="#34323f" stroke="none"/>
<path d="M1317.6 13V39" stroke="#bab9c2" stroke-width="1.7" stroke-dasharray="3 1.4"/><path d="M1320.6 16H1343.4M1321 24L1328.4 16M1320.6 29H1346.8M1321 37L1328.4 29" stroke="#b7b6bf" stroke-width="1.9"/>
<path d="M1328.3 64.0h6.2l-3.1 3.2z" fill="#34323f" stroke="none"/>
<rect x="1381.4" y="15.8" width="13.6" height="13.4" stroke-width="2"/><rect x="1386.6" y="20.6" width="3.6" height="3.6" fill="#34323f" stroke="none"/>
<path d="M1385.1 64.0h6.2l-3.1 3.2z" fill="#34323f" stroke="none"/>
<path d="M1432 35.8H1457" stroke-width="2.1"/><text x="1446" y="31.6" font-family="Liberation Sans,sans-serif" font-weight="bold" font-size="30.5" fill="#34323f" stroke="#34323f" stroke-width="0.9" textLength="10.6" lengthAdjust="spacingAndGlyphs">a</text>
<path d="M1441.3 64.0h6.2l-3.1 3.2z" fill="#34323f" stroke="none"/>
<text x="1501" y="40.2" text-anchor="middle" font-family="Liberation Serif,serif" font-weight="bold" font-size="41" fill="#34323f" stroke="#34323f" stroke-width="0.5" textLength="25.4" lengthAdjust="spacingAndGlyphs">T</text>
<path d="M1497.9 64.0h6.2l-3.1 3.2z" fill="#34323f" stroke="none"/>
<text x="1549.8" y="25.2" text-anchor="middle" font-family="Liberation Serif,serif" font-weight="bold" font-size="30" fill="#34323f" stroke="none" textLength="16.4" lengthAdjust="spacingAndGlyphs">T</text><circle cx="1538" cy="16.1" r="2.2" fill="#34323f" stroke="none"/><path d="M1535 27.5H1557.6" stroke-width="1.9"/>
<rect x="1539.6" y="43.2" width="7" height="22.6" fill="#34323f" stroke="none"/><rect x="1549.8" y="51.6" width="5.8" height="13.4" stroke-width="1.6"/>
<path d="M1668.5 53.4h6.2l-3.1 3.2z" fill="#34323f" stroke="none"/>
<path d="M1683 15.6H1695.4" stroke-width="1.1"/><rect x="1684.6" y="3.6" width="3.4" height="10.6" fill="#34323f" stroke="none"/><rect x="1690" y="7.8" width="3.2" height="6.2" stroke-width="1.1"/>
<path d="M1702.4 2.4H1709.4" stroke-width="1.2"/><rect x="1704.2" y="4.4" width="3.8" height="10" fill="#34323f" stroke="none"/>
<path d="M1682.6 22.6V34" stroke="#77757f" stroke-width="1.1"/><rect x="1684.6" y="24" width="6" height="3" stroke="#77757f" stroke-width="1"/><rect x="1684.2" y="29.2" width="10.6" height="3.6" fill="#34323f" stroke="none"/>
<path d="M1702.4 32.4H1709.6M1709 23v9" stroke-width="1.2"/><rect x="1705" y="26.6" width="3.2" height="4" fill="#34323f" stroke="none"/>
<path d="M1689.2 41.6V53" stroke-width="1.1"/><rect x="1685.6" y="43" width="7.4" height="3" stroke-width="1"/><rect x="1683.4" y="47.8" width="11.8" height="3.6" fill="#34323f" stroke="none"/>
<path d="M1702.4 46.6H1709.6" stroke-width="1.1"/><rect x="1704.4" y="41.6" width="3.4" height="10.6" fill="#34323f" stroke="none"/>
<rect x="1683.4" y="60" width="4.6" height="4" stroke="#77757f" stroke-width="1"/><rect x="1684" y="65.2" width="8" height="3.4" fill="#8a8894" stroke="none"/><rect x="1689.6" y="67.6" width="4.6" height="4.6" fill="#34323f" stroke="none"/>
<rect x="1702.4" y="61.6" width="3.2" height="4" stroke="#77757f" stroke-width="1"/><path d="M1708.4 60.4V72" stroke="#8a8894" stroke-width="1.6"/>
<rect x="1751" y="11.2" width="28.4" height="22.6" stroke-width="2"/><path d="M1751 13.4H1779.4" stroke-width="5"/><path d="M1753.2 13.6h1.6M1756.6 13.6h1.6M1760 13.6h1.6" stroke="#f3f3f8" stroke-width="1.5"/>
<path d="M1761.3 66.8h6.2l-3.1 3.2z" fill="#34323f" stroke="none"/>
</svg>
<div class="tc" style="left:871px;top:50.2px">零件标记</div>
<div class="t" style="left:944px;top:12px">焊接标记</div>
<div class="t" style="left:944px;top:49.4px">水平标记</div>
<div class="t" style="left:1057px;top:12px">剖面标记</div>
<div class="t" style="left:1057px;top:49.4px">细部标记</div>
<div class="t" style="left:1172px;top:12px">修订标记</div>
<div class="t" style="left:1172px;top:49.4px">更新</div>
<div class="tc" style="left:1275px;top:53.4px">排列标记</div>
<div class="tc" style="left:1331.6px;top:50.2px">对齐标记</div>
<div class="tc" style="left:1388.2px;top:50.2px">符号</div>
<div class="tc" style="left:1444.6px;top:50.2px">注释</div>
<div class="tc" style="left:1501px;top:50.2px">文本</div>
<div class="t" style="left:1565px;top:12px">富文本</div>
<div class="t" style="left:1567px;top:49.4px">安排对象</div>
<div class="tc" style="left:1764.6px;top:52px">窗口</div>
<div class="abs" style="left:-2px;top:878.5px;width:334px;height:28.5px;border:1px solid #e6e6ec;border-top-color:#eeeef3;border-radius:2px"></div>
<div class="abs" style="left:334.6px;top:880px;width:279px;height:24px;border:1px solid #e3e3ea;border-radius:2px"></div>
<div class="abs" style="left:337px;top:882px;width:1.6px;height:19px;background:#e6e6ec"></div>
<div class="abs" style="left:527px;top:882px;width:1px;height:19px;background:#dcdce3"></div>
<div class="tb" style="left:-0.2px;top:884px"></div>
<svg style="left:-0.2px;top:884px" width="19" height="19"><path d="M6 4.2V13.6L8.2 11.6L10 15.2L11.7 14.4L10 10.9L13.2 10.7z" fill="#34323f"/></svg>
<div class="tb" style="left:20.5px;top:884px"></div>
<svg style="left:20.5px;top:884px" width="19" height="19"><path d="M4.5 15.5L15 4.5" stroke="#34323f" stroke-width="1.5"/></svg>
<div class="tb" style="left:41.2px;top:884px"></div>
<svg style="left:41.2px;top:884px" width="19" height="19"><text x="9.8" y="15.4" text-anchor="middle" font-family="Liberation Serif,serif" font-weight="bold" font-size="16" fill="#34323f">T</text></svg>
<div class="tb" style="left:62.0px;top:884px"></div>
<svg style="left:62.0px;top:884px" width="19" height="19"><path d="M4 13.2L6.2 9.8H15" stroke="#34323f" stroke-width="2" fill="none"/></svg>
<div class="tb" style="left:82.7px;top:884px"></div>
<svg style="left:82.7px;top:884px" width="19" height="19"><rect x="3.6" y="4" width="11.6" height="11.4" fill="#1e8bd0"/></svg>
<div class="tb" style="left:103.4px;top:884px"></div>
<svg style="left:103.4px;top:884px" width="19" height="19"><rect x="4.2" y="4.4" width="10.6" height="10.6" fill="none" stroke="#34323f" stroke-width="1.5"/><rect x="7.9" y="8.1" width="3.2" height="3.2" fill="#34323f"/></svg>
<div class="tb" style="left:124.1px;top:884px"></div>
<svg style="left:124.1px;top:884px" width="19" height="19"><path d="M9.5 8.5L12.5 5L15 8.2L13.4 9.4L12.4 8.2L10.6 10z" fill="#34323f"/><path d="M4.5 14.5L9.5 9.5M4.2 10.6l1 1M6.6 12.8l1 1" stroke="#6a6877" stroke-width="1" stroke-dasharray="1.4 1.2"/></svg>
<div class="tb" style="left:144.8px;top:884px"></div>
<svg style="left:144.8px;top:884px" width="19" height="19"><rect x="4.2" y="5.6" width="10.6" height="8.6" fill="#dcdce2" stroke="#34323f" stroke-width="1.5"/><path d="M4.2 6.9h10.6" stroke="#34323f" stroke-width="2.4"/></svg>
<div class="tb" style="left:165.6px;top:884px"></div>
<svg style="left:165.6px;top:884px" width="19" height="19"><path d="M3.6 9.6h12M5.6 5.8v7.8M8.8 5.8v7.8M13 5.8v7.8" stroke="#34323f" stroke-width="1.3"/></svg>
<svg style="left:186.3px;top:884px" width="19" height="19"><path d="M4.4 9.6h10.4M4.8 6.2v6.8M14.4 6.2v6.8" stroke="#34323f" stroke-width="1.4"/></svg>
<div class="tb" style="left:207.0px;top:884px"></div>
<svg style="left:207.0px;top:884px" width="19" height="19"><path d="M3.6 6.6h11M3.6 9.8h11M3.6 13h11M5.8 4v12M9 4v12M12.2 4v12" stroke="#34323f" stroke-width="1.2"/><path d="M15.2 4v12" stroke="#34323f" stroke-width="1" stroke-dasharray="1.5 1.5"/></svg>
<svg style="left:227.7px;top:884px" width="19" height="19"><path d="M3.6 6.6h11M3.6 9.8h11M3.6 13h11M5.8 4v12M9 4v12" stroke="#34323f" stroke-width="1" stroke-dasharray="2 1"/><path d="M12.4 4v12" stroke="#f08a24" stroke-width="1.4"/><path d="M15.2 5v10" stroke="#34323f" stroke-width="1" stroke-dasharray="1.5 1.5"/></svg>
<div class="tb" style="left:248.4px;top:884px"></div>
<svg style="left:248.4px;top:884px" width="19" height="19"><circle cx="11.4" cy="7.8" r="3.6" fill="none" stroke="#34323f" stroke-width="1.3"/><circle cx="11.6" cy="7.8" r="0.9" fill="#34323f"/><path d="M8.6 10.4C7.8 13.2 6.6 13.8 3.8 13.8" stroke="#34323f" stroke-width="1.5" fill="none"/></svg>
<div class="tb" style="left:269.2px;top:884px"></div>
<svg style="left:269.2px;top:884px" width="19" height="19"><path d="M6.4 7.2h6.4v3.6L11.2 13v2.8H8V13L6.4 10.8z" fill="#34323f"/><path d="M7.8 4.2v3M11.4 4.2v3" stroke="#34323f" stroke-width="1.4"/></svg>
<svg style="left:289.9px;top:884px" width="19" height="19"><circle cx="9.4" cy="10" r="5.6" fill="#e9e9ee" stroke="none"/><path d="M4.6 7.4l7.4 7.4M6.4 5.4l8 8M9 4.6l5.6 5.6M4 10.2l5.2 5.2M4.6 12.6l7.4-7.4M6.6 14.6l8-8M9.6 15.2l5.2-5.2M4 9.6l5.2-5.2" stroke="#34323f" stroke-width="0.9"/></svg>
<svg style="left:310.6px;top:884px" width="19" height="19"><path d="M3.4 9.6C5.6 5.2 13 5.2 15.2 9.6C13 14 5.6 14 3.4 9.6z" fill="#34323f"/><circle cx="9.4" cy="9.4" r="2.3" fill="#f3f3f8"/><circle cx="9.6" cy="9.4" r="1.2" fill="#34323f"/></svg>
<div class="tb" style="left:340.3px;top:882px"></div>
<svg style="left:340.3px;top:882px" width="19" height="19"><rect x="3.8" y="3.8" width="11.2" height="11.2" fill="none" stroke="#34323f" stroke-width="1.5"/><path d="M3.8 3.8L15 15M15 3.8L3.8 15" stroke="#34323f" stroke-width="1.4"/></svg>
<div class="tb" style="left:361.0px;top:882px"></div>
<svg style="left:361.0px;top:882px" width="19" height="19"><rect x="4" y="4" width="11" height="11" fill="none" stroke="#34323f" stroke-width="1.4"/></svg>
<svg style="left:381.7px;top:882px" width="19" height="19"><circle cx="9.4" cy="9.6" r="5.2" fill="none" stroke="#34323f" stroke-width="1.3"/></svg>
<div class="tb" style="left:402.5px;top:882px"></div>
<svg style="left:402.5px;top:882px" width="19" height="19"><path d="M9.4 5.4L14 14H4.8z" fill="none" stroke="#34323f" stroke-width="1.4"/></svg>
<div class="tb" style="left:423.2px;top:882px"></div>
<svg style="left:423.2px;top:882px" width="19" height="19"><path d="M4.4 4.6L14.4 14.6M14.4 4.6L4.4 14.6" stroke="#34323f" stroke-width="1.4"/></svg>
<div class="tb" style="left:443.9px;top:882px"></div>
<svg style="left:443.9px;top:882px" width="19" height="19"><path d="M4 14.4h10.6V4.6M10 14.4v-4.2h4.6" stroke="#34323f" stroke-width="1.4" fill="none"/></svg>
<div class="tb" style="left:464.6px;top:882px"></div>
<svg style="left:464.6px;top:882px" width="19" height="19"><path d="M5.8 4.6h7.4L6 14.6h7.2L5.8 4.6" stroke="#34323f" stroke-width="1.4" fill="none" stroke-linejoin="round"/></svg>
<div class="tb" style="left:485.3px;top:882px"></div>
<svg style="left:485.3px;top:882px" width="19" height="19"><path d="M8.6 4.6h6L9 14.6h5.6L8.6 4.6" stroke="#34323f" stroke-width="1.3" fill="none" stroke-linejoin="round"/><path d="M3 9.6h8" stroke="#34323f" stroke-width="1" stroke-dasharray="1.6 1.2"/></svg>
<svg style="left:506.1px;top:882px" width="19" height="19"><path d="M3.8 12.2L9.4 7L14.6 11.6" stroke="#34323f" stroke-width="1.4" fill="none"/></svg>
<div class="tb" style="left:530.1px;top:882px"></div>
<svg style="left:530.1px;top:882px" width="19" height="19"><rect x="3.4" y="3.6" width="12.2" height="12.2" fill="#4a4859"/><rect x="6.8" y="7" width="5.4" height="5.4" fill="#f59331"/></svg>
<div class="tb" style="left:550.7px;top:882px"></div>
<svg style="left:550.7px;top:882px" width="19" height="19"><rect x="4.6" y="4.8" width="9.8" height="9.8" fill="#4a4859"/><path d="M3 5.2V3.4h2.2M13.6 3.4h2.2v1.8M3 14.2V16h2.2M13.6 16h2.2v-1.8" stroke="#f58220" stroke-width="1.7" fill="none"/></svg>
<svg style="left:571.3px;top:882px" width="19" height="19"><path d="M5 6.6h9.4" stroke="#34323f" stroke-width="1.6"/><path d="M5.6 6v9M11.6 6v9" stroke="#34323f" stroke-width="1.3"/><circle cx="5.6" cy="11" r="1.9" fill="#34323f"/><circle cx="13.4" cy="6.6" r="2.1" fill="#34323f"/></svg>
<svg style="left:591.9px;top:882px" width="19" height="19"><path d="M3.4 9.4C5.6 5 13 5 15.2 9.4C13 13.8 5.6 13.8 3.4 9.4z" fill="#34323f"/><circle cx="9.4" cy="9.2" r="2.3" fill="#f3f3f8"/><circle cx="9.6" cy="9.2" r="1.2" fill="#34323f"/></svg>
<div class="t" style="left:1300.5px;top:910.5px;font-size:11.3px;line-height:14px;color:#26242e">d</div>
<div class="t" style="left:1355px;top:910.5px;font-size:11.3px;line-height:14px;color:#26242e">0</div>
<div class="t" style="left:1382px;top:910.5px;font-size:11.3px;line-height:14px;color:#26242e">Pan</div>
<div class="t" style="left:1429px;top:910.5px;font-size:11.3px;line-height:14px;color:#26242e">目前的状态 1, 状态 1</div>
<div class="t" style="left:1644px;top:910.5px;font-size:11.3px;line-height:14px;color:#26242e">0 + 0 选择的物体</div>
</body></html>
